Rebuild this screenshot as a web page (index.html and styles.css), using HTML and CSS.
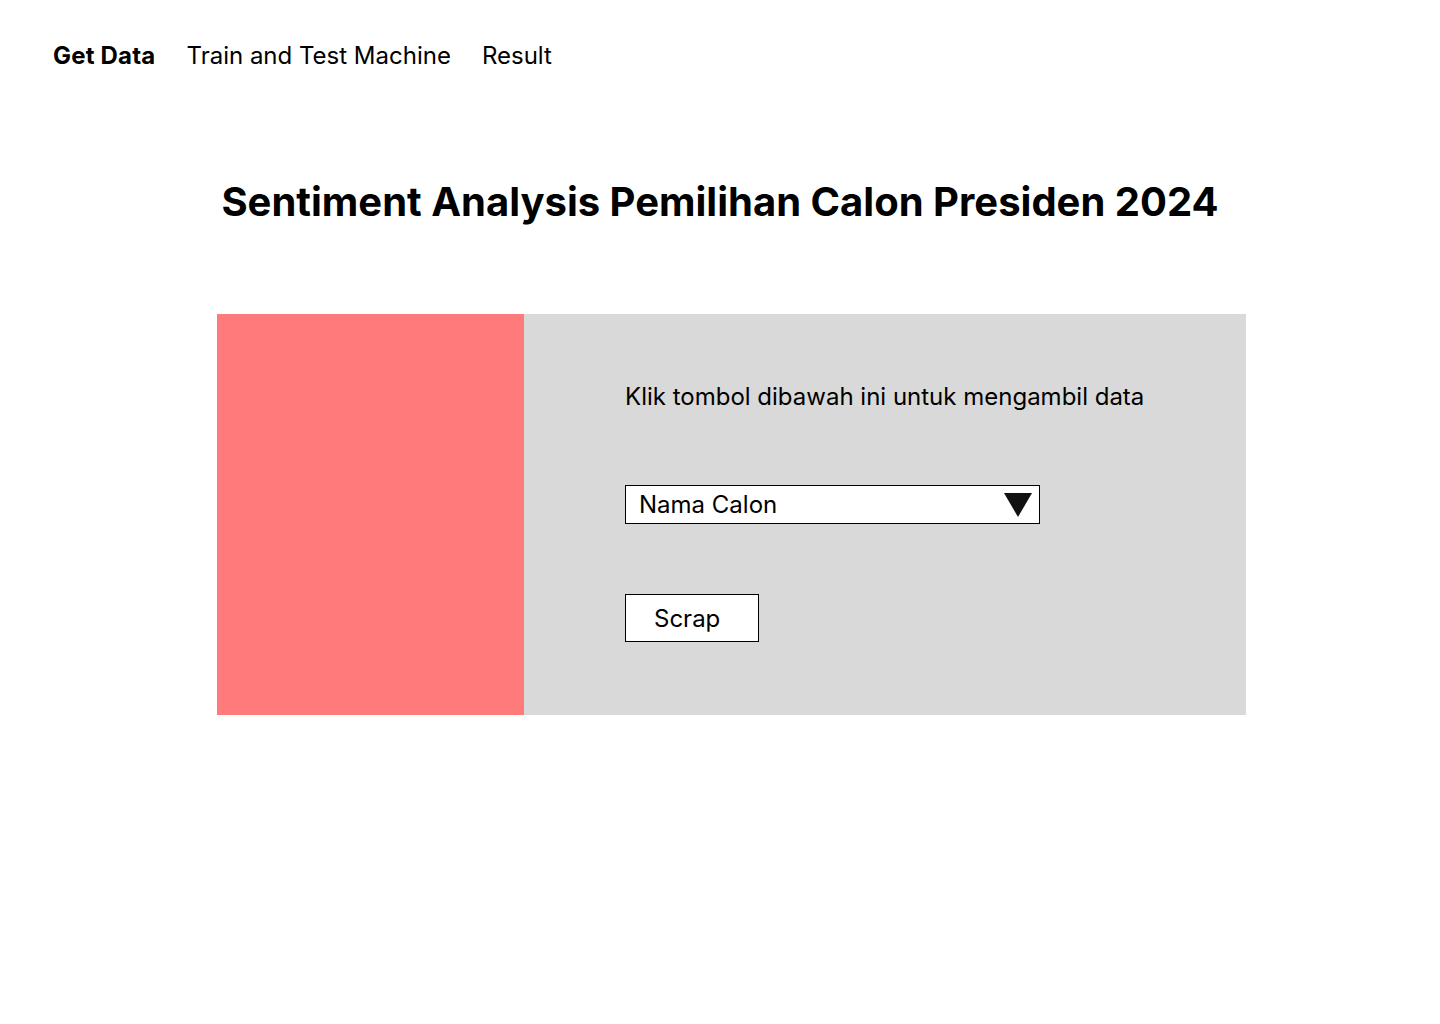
FILE: index.html
```html
<!DOCTYPE html>
<html lang="id">
<head>
<meta charset="utf-8">
<title>Sentiment Analysis</title>
<link rel="stylesheet" href="styles.css">
</head>
<body>
<nav class="nav">
  <a class="nav-item active" href="#">Get Data</a>
  <a class="nav-item" href="#">Train and Test Machine</a>
  <a class="nav-item" href="#">Result</a>
</nav>
<h1 class="title">Sentiment Analysis Pemilihan Calon Presiden 2024</h1>
<section class="panel">
  <div class="panel-side"></div>
  <div class="panel-main">
    <p class="intro">Klik tombol dibawah ini untuk mengambil data</p>
    <div class="select">
      <span class="select-label">Nama Calon</span>
      <svg class="select-arrow" width="28" height="24" viewBox="0 0 28 24"><polygon points="0,0 28,0 14,24" fill="#111"/></svg>
    </div>
    <button class="btn" type="button">Scrap</button>
  </div>
</section>
</body>
</html>
```

FILE: styles.css
```css
* { box-sizing: border-box; }
body {
  margin: 0;
  font-family: Inter, "Noto Sans", sans-serif;
  color: #000;
  background: #fff;
}
.nav {
  display: flex;
  gap: 31px;
  padding: 41px 0 0 53px;
}
.nav-item {
  font-size: 24px;
  line-height: 29px;
  color: #000;
  text-decoration: none;
}
.nav-item.active { font-weight: 700; letter-spacing: 0.2px; }
.title {
  margin: 108px 0 0;
  text-align: center;
  font-size: 40px;
  line-height: 48px;
  font-weight: 700;
}
.panel {
  display: flex;
  margin: 88px 0 0 217px;
  width: 1029px;
  height: 401px;
}
.panel-side {
  width: 307px;
  background: #ff7b7b;
}
.panel-main {
  flex: 1;
  background: #d9d9d9;
  padding: 68px 0 0 101px;
  display: flex;
  flex-direction: column;
  align-items: flex-start;
}
.intro {
  margin: 0;
  font-size: 24px;
  line-height: 29px;
}
.select {
  margin-top: 74px;
  width: 415px;
  height: 39px;
  background: #fff;
  border: 1px solid #000;
  display: flex;
  align-items: center;
  justify-content: space-between;
  padding: 0 7px 0 13px;
}
.select-label {
  font-size: 24px;
  line-height: 29px;
}
.select-arrow { display: block; }
.btn {
  margin-top: 70px;
  width: 134px;
  height: 48px;
  background: #fff;
  border: 1px solid #000;
  border-radius: 0;
  font-family: inherit;
  font-size: 24px;
  color: #000;
  text-align: left;
  padding: 0 0 0 28px;
}
```
